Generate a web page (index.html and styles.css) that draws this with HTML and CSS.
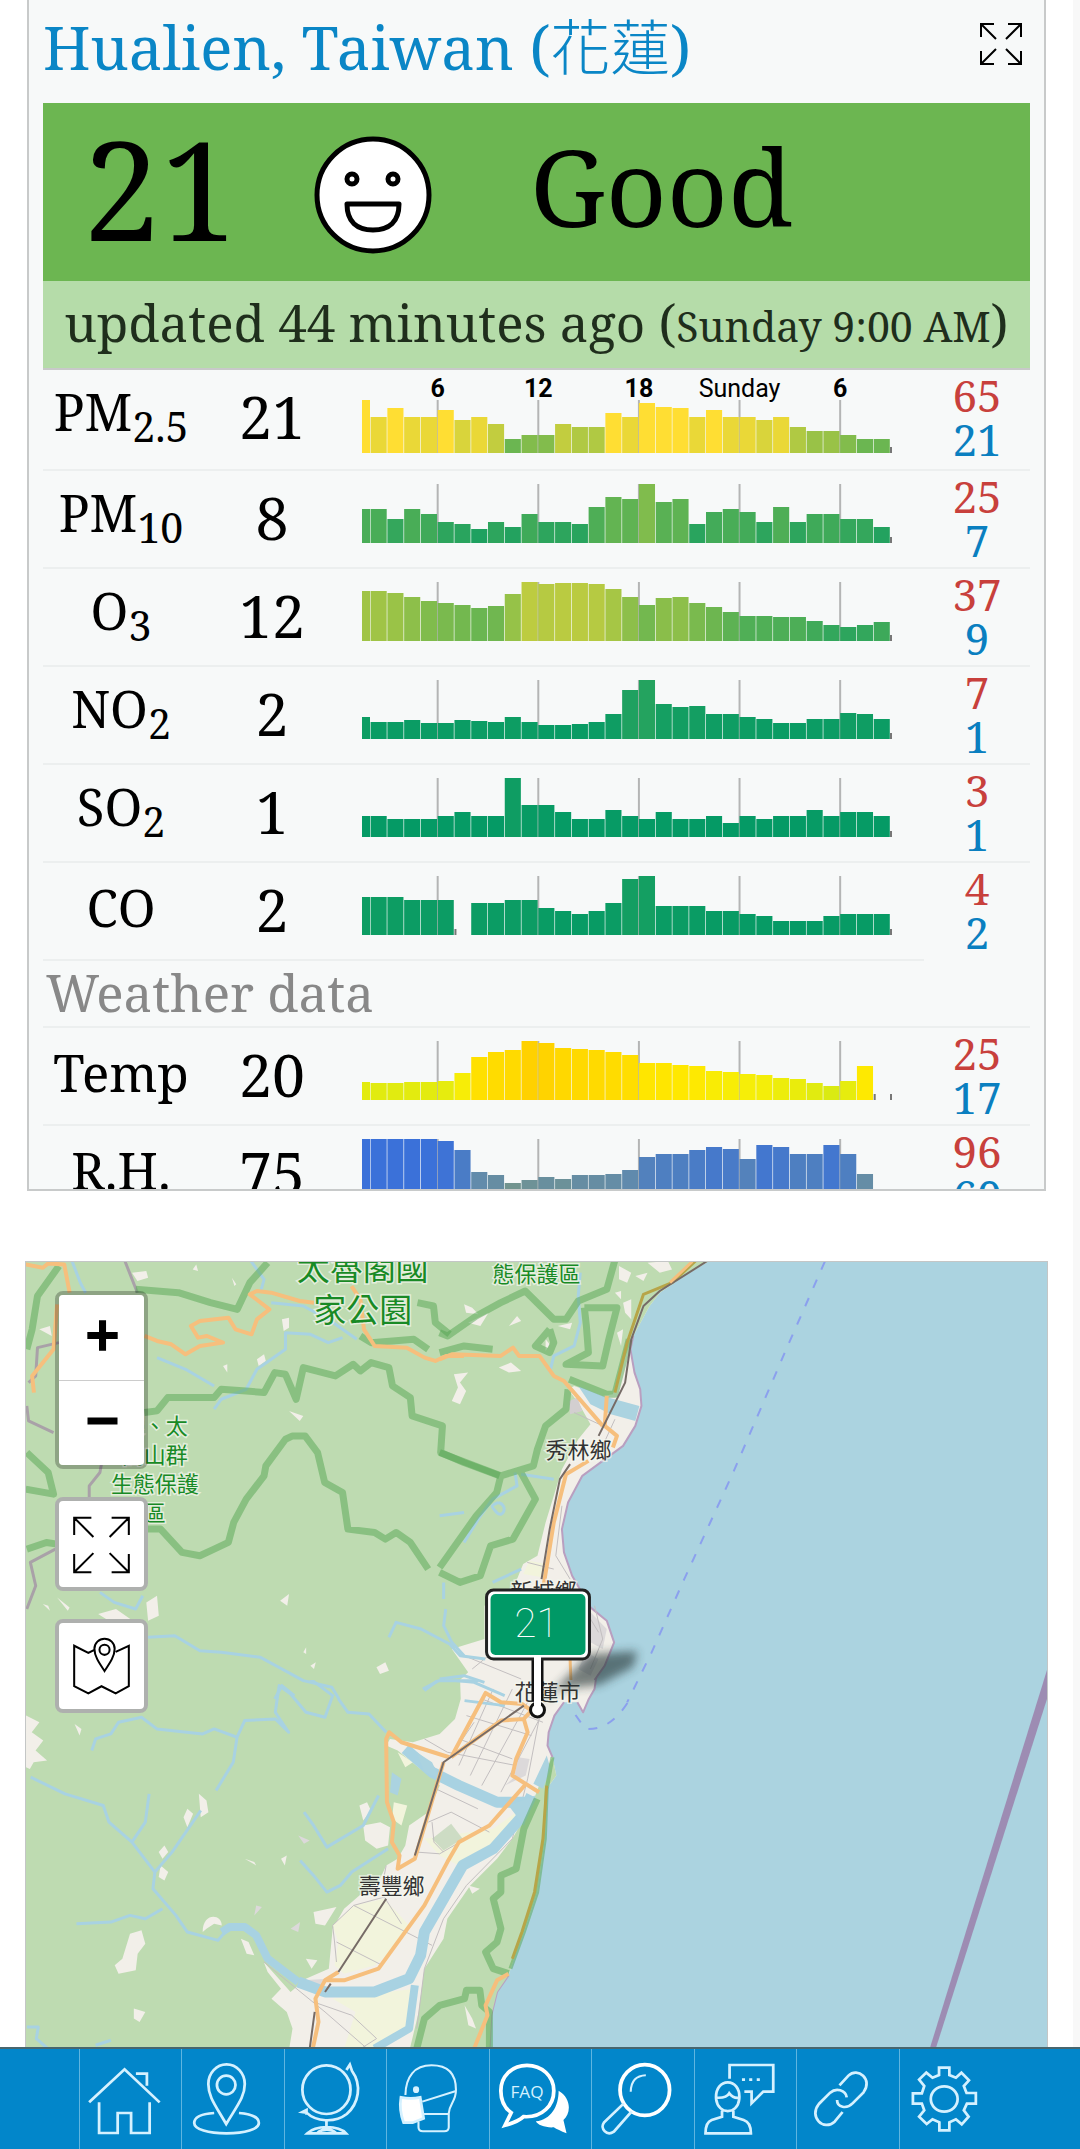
FILE: index.html
```html
<!DOCTYPE html>
<html lang="en">
<head>
<meta charset="utf-8">
<meta name="viewport" content="width=device-width, initial-scale=1">
<title>Hualien, Taiwan air quality</title>
<link rel="stylesheet" href="styles.css">
</head>
<body>
<div class="page">
<main class="content">
<section class="card">
  <header class="card-head">
    <h1 class="title"><a href="#hualien">Hualien, Taiwan (<span lang="zh-TW">花蓮</span>)</a></h1>
    <button class="expand" aria-label="Expand"><svg viewBox="0 0 42 42"><path d="M1 14V1h13M1 1l15 15M28 1h13v13M41 1L26 16M1 28v13h13M1 41l15-15M28 41h13V28M41 41L26 26"/></svg></button>
  </header>
  <div class="banner">
    <span class="aqi">21</span>
    <svg class="face" viewBox="0 0 118 118" aria-hidden="true"><circle cx="59" cy="59" r="56" fill="#fff" stroke-width="5"/><circle cx="38" cy="43" r="5" stroke-width="5"/><circle cx="79" cy="43" r="5" stroke-width="5"/><path d="M33 68h52c0 18-10 26-26 26S33 86 33 68z" stroke-width="5" stroke-linejoin="round"/></svg>
    <span class="level">Good</span>
  </div>
  <p class="updated">updated 44 minutes ago (<small>Sunday 9:00 AM</small>)</p>
  <table class="readings">
    <colgroup><col class="c-name"><col class="c-value"><col><col class="c-range"></colgroup>
    <tbody>
    <tr class="first"><th scope="row">PM<sub>2.5</sub></th><td class="value">21</td><td class="chart" data-series="pm25"></td><td class="range"><b>65</b><i>21</i></td></tr>
    <tr><th scope="row">PM<sub>10</sub></th><td class="value">8</td><td class="chart" data-series="pm10"></td><td class="range"><b>25</b><i>7</i></td></tr>
    <tr><th scope="row">O<sub>3</sub></th><td class="value">12</td><td class="chart" data-series="o3"></td><td class="range"><b>37</b><i>9</i></td></tr>
    <tr><th scope="row">NO<sub>2</sub></th><td class="value">2</td><td class="chart" data-series="no2"></td><td class="range"><b>7</b><i>1</i></td></tr>
    <tr><th scope="row">SO<sub>2</sub></th><td class="value">1</td><td class="chart" data-series="so2"></td><td class="range"><b>3</b><i>1</i></td></tr>
    <tr><th scope="row" class="plain">CO</th><td class="value">2</td><td class="chart" data-series="co"></td><td class="range"><b>4</b><i>2</i></td></tr>
    <tr class="group"><th scope="rowgroup" colspan="3">Weather data</th></tr>
    <tr><th scope="row" class="plain">Temp</th><td class="value">20</td><td class="chart" data-series="temp"></td><td class="range"><b>25</b><i>17</i></td></tr>
    <tr><th scope="row" class="plain">R.H.</th><td class="value">75</td><td class="chart" data-series="rh"></td><td class="range"><b>96</b><i>60</i></td></tr>
    </tbody>
  </table>
</section>

<section class="map" aria-label="Map">
<svg class="tiles" viewBox="26 1262 1022 787" preserveAspectRatio="xMidYMid slice">
  <defs><filter id="soft" x="-50%" y="-50%" width="200%" height="200%"><feGaussianBlur stdDeviation="5"/></filter></defs>
  <rect x="0" y="1200" width="1400" height="1000" fill="#abd3e0"/>
  <!-- south: plain, river valley and coastal range -->
  <g transform="translate(0 1680) scale(.3827 .3333)">
    <path fill="#f2efe9" d="M0-10H1560L1555 30 1540 60 1525 100 1510 70H1475L1450 110 1435 160 1432 200 1445 235 1455 290 1430 330 1425 480 1405 640 1370 760 1350 820 1330 890 1300 940 1285 1010 1280 1120H0z"/>
    <path class="coast" d="M1560-10L1555 30 1540 60 1525 100 1510 70M1475 70L1450 110 1435 160 1432 200 1445 235M1330 890L1300 940 1285 1010 1280 1120"/>
    <path fill="#bedbb1" d="M60-10H1203L1205 60 1190 120 1150 165 1080 190 1020 180 1010 200 1040 215 1100 270 1140 300 1150 320 1120 400 1070 440 1060 500 1040 540 1010 560 990 610 940 650 900 690 870 750 860 870 800 900 760 940 690 850 700 880 735 930 710 960 750 1000 765 1050 755 1120H60z"/>
    <path fill="#bedbb1" d="M1445 235L1455 290 1430 330 1425 480 1405 640 1370 760 1350 820 1330 890 1300 940 1285 1010 1280 1120H1070L1095 1000 1110 870 1160 780 1170 720 1230 620 1300 540 1340 480 1380 400 1400 350 1420 290z"/>
    <path fill="#f2f4dc" d="M925 680L1005 660 1070 740 1030 810 980 860 900 885 875 860 885 790 870 740zM870 960L1085 930 1075 1050 985 1110H900L930 1000zM1110 480L1290 450 1350 400 1330 470 1200 560 1150 530zM1030 370L1065 380 1050 440 1025 420zM1040 220L1080 250 1060 265z"/>
    <path fill="#f2efe9" d="M68 110l35 20-20 30 30 25-20 30 30 30-35 5-10 20-10-5zM195 135l18 15-5 20zM520 345l20 20 5 35-20 15zM490 390l15 15-15 40-10-30zM430 500l10 20-15 20-10-20zM420 560l20 20-10 25-15-10zM530 760c0-60 50-55 50-20l-20-5-20 15zM340 765l30-10 10 40-20 30-5 50-45 10-10-25 20-20zM630 780l20 10 15 40-20-5zM350 990l30 10-15 30-15-10zM950 440l45-10 25 15-5 55-30 10-30-25zM640 540l25 10 5 10zM735 540l15-10-5 30zM820 700l60-15-30 55-25-5zM800 840l30 5-15 25zM940 380l20-10 10 25-20 30zM1140 700l20 30-20 60-25 20zM1225 620l30 10-20 15zM1215 980l20 40 10 30-20-10z"/>
    <path fill="#dcd9da" d="M1320 320l55-30 10-50-30-5-10 60zM790 905l70-5-40 40zM780 470l30 15-15 10zM760 750l25-20-5 30zM670 680l15 5-20 25z"/>
    <path fill="#cddcc4" d="M1130 480l50-45 30 45-50 35z"/>
    <g class="grid"><path d="M1240 130L1180 230M1290 30L1200 260M1340 30L1230 290M1380 70L1260 320M1420 100L1310 340M1260 60L1420 130M1220 110L1390 170M1110 180L1170 220 1350 260M1200 180L1340 240M1140 330L1250 390M1120 430L1180 400 1280 460M1130 430L1135 490 1160 520M1090 520L1150 525 1210 485M690 850L850 1000 960 1110M820 970L920 1010 985 1080 930 1120M925 680L1130 800M875 790L870 740 925 680 1005 655 1050 735M880 790L1000 860M875 790L880 850M1010 560L1000 620M1415 90L1380 300 1340 480 1220 620 1160 720 1110 870 1090 1050"/></g>
    <g class="water"><path d="M240 215L250 180 290 165 310 130 370 115 410 150 530 165 560 150 620 175 640 125 720 120 755 160 720 100 730 20 760 45 800 100 850 115 870 50 800-10M620 175L610 250 565 335M80 295L170 345 270 380 285 430 345 490 405 580 400 630 460 710 490 760 570 785 600 745M345 490L380 430 390 345M525 395L450 520 405 580M200 735L290 730 340 710 380 720 425 690M795 400L820 440 855 505 950 440 990 350M785 545L820 590 855 640 890 620 920 580 1015 510M885 60L910 100 965 105 1010 160M70 1045H100L95 1080 130 1115M250 1100L290 1085M1110 35L1150 0 1240 10 1320 50M1215 65L1320 80"/></g>
    <g class="water w2"><path d="M580 760L600 745 640 745 670 770 700 840 780 910"/></g>
    <g class="water w3"><path d="M780 910L850 940 980 940 1070 900 1100 830 1110 760 1150 680 1210 560 1290 510 1360 420 1390 350M1060 210L1130 280 1200 320 1300 370 1380 370"/></g>
    <g class="water w2"><path d="M1085 920L1070 1050 980 1110"/></g>
    <path fill="#abd3e0" d="M1090 220l40 30 20 50-40-20zM1025 280l25 20-10 50-20-10zM1330 380l70-30-30 90zM1430 230l10 40-20 60-25-15z"/>
    <path class="reserve" d="M1405 360L1370 450 1350 570 1310 590 1310 640 1290 660 1310 750 1300 790 1270 820 1290 870 1330 885M1090 1110L1110 1020 1150 980 1215 960 1220 935 1255 935 1260 980 1280 1000V1110"/>
    <path class="reserve thin" d="M1445 235L1430 330 1425 480 1405 640 1370 760 1335 870"/>
    <path class="gold" d="M1430 320L1420 480 1398 640 1365 760 1340 840"/>
    <path class="road" d="M1180 235L1270 42 1310 70 1365 75 1390 95 1370 120 1310 125 1180 235M1160 250L1085 540 1040 570 1045 530 1025 490 1030 430 1012 370 1010 180 1018 160 1050 190 1175 235M1370 120L1380 160 1350 240 1340 290 1410 340M1372 320L1280 440 1200 490 1170 550 1110 680 990 870 900 905 850 905 825 960 833 1030 818 1110M850 905L885 880M1330 885L1300 905 1270 980 1275 1010 1240 1110"/>
    <path class="rail" d="M1370 80L1160 250 1085 530M1010 660L885 880M865 915L850 940M823 1000L810 1110"/>
  </g>
  <!-- north-west: national park -->
  <g transform="translate(440 1240) scale(.40816 .33333)">
    <path fill="#f2efe9" d="M-1100 0H690L665 62 600 110 540 160 515 200 475 290 468 330 478 400 492 450 495 500 480 560 450 620 400 665 350 710 315 790 300 870 305 940 325 1010 370 1105 410 1145 428 1210 405 1280 380 1323H-1100z"/>
    <path class="coast" d="M475 290L468 330 478 400 492 450 495 500 480 560 450 620 400 665 350 710 315 790 300 870 305 940 325 1010 370 1105 410 1145 428 1210 405 1280 380 1323"/>
    <path fill="#bedbb1" d="M-1100 0H690L665 62 600 110 540 160 515 200 475 290 440 400 425 465 400 470 330 440 315 450 340 490 370 555 340 600 300 690 290 730 260 850 240 950 205 975 180 1050 110 1100V1200L30 1230 70 1300 50 1323H-1100z"/>
    <path fill="#f2efe9" d="M440 80l30 20-10 30-20-10zM480 110l30-10-10 25zM510 70l50-5 10 25-30 10zM430 160l15-5v25zM450 190l20-10v60l-15-20zM435 280l15-10-5 50zM60 195l20 10 15 20-30-5zM70 250l50-30-20 40zM170 260l20-30 10 15zM290 260l35-10-5 20zM145 385l30-15 25 25-30 5zM35 405l35-5-20 30 15 25-15 40-20-10 15-40zM260 300l10 15-10 20z"/>
    <path fill="#f2f4dc" d="M220 965l-15 40 50 10 5-40z"/>
    <path fill="#abd3e0" d="M340 440l60 30 90 30-10 45-60-20-50-30z"/>
    <path fill="#d3cfd0" d="M318 485l20-10 12 40-30 10z"/>
    <path fill="#dcd9da" d="M370 1120l40 50-10 60-30-20zM360 1240l30 20-20 50-30-20z"/>
    <g class="grid"><path d="M60 1250L200 1320M80 1290L120 1250M215 970L280 990M380 1100L400 1200 370 1290M330 520L400 560M430 540L400 620M300 800L285 950 320 1020M390 1180L370 1140"/></g>
    <g class="water"><path d="M345 100L340 170 345 250 330 320 280 350 270 400M185 700L190 740 130 780 100 830 60 910M145 790c25 10 10 50-5 30s-15-20 5-30M0 830L60 820M200 705L280 720M130 1030L200 990M10 1030V1080M15 1110L10 1160 30 1210 60 1250M0 1320L60 1310 110 1330"/></g>
    <path class="reserve" d="M430 62L410 150 340 185 310 240 280 240 210 155 150 190 90 230 20 290 0 280M355 205H435L415 300 400 380 310 375 365 340 360 260 355 205M270 270L235 320 270 340 280 310 270 270M0 340L60 320 130 330M315 450L310 510 260 560 240 630 230 680 150 710 0 640M150 710L140 760 90 830 0 985M195 690L235 780 180 900 125 920 100 1010 50 1030 0 1000"/>
    <path class="reserve" d="M318 420L410 465 430 465 465 300"/>
    <path class="road" d="M0 360L30 345 150 350 180 325 195 350 245 350 280 410 305 425 400 560M410 470L405 560 435 590 425 625M365 665L310 705 280 850 255 1040"/>
    <path class="gold" d="M630 62L570 130 500 165 460 310 430 460"/>
    <path class="rail" d="M660 62L540 155 500 200 470 300 455 430 390 590M320 675L295 720 270 870 250 1020"/>
    <path class="road thin" d="M320 1260L322 1323M620 66L565 130"/>
    <path fill="none" stroke="#8ba0ee" stroke-width="2" stroke-dasharray="9 11" vector-effect="non-scaling-stroke" d="M945 66L850 330 720 700 600 1020 520 1240 460 1390"/>
  </g>
  <g transform="translate(0 1240) scale(.35714 .33333)">
    <path fill="#f2efe9" d="M370 100l40-5 5 20-30 10zM650 115l12 20-5 5zM110 270l30-10 5 30zM790 240l20-5v30l-15 10zM720 360l20-15 5 20-20 15zM625 380l12-5v25zM540 90l10-15 5 20zM810 515l40 15-10 15zM785 1085l25-20-5 35zM1055 1285l25-15 10 25-25 10zM275 1125l50-15 40 30-60 5zM410 1090l30-20 5 60-30 15zM160 1075l35 30-5 10zM120 1095l15 5 5 15zM850 1240l8-15v20zM870 1280l15-10-5 20z"/>
    <g class="water"><path d="M700 60L740 120 730 160M200 60L225 130 240 160M440 355L520 390 600 440M600 510L620 480 690 450 720 390 800 330 800 280 870 285 920 310 960 295M760 190L850 200 920 240 1000 300M280 1060L320 1090 380 1110 400 1070M415 1195L490 1190 560 1235 620 1240 730 1255 790 1290 850 1325 930 1345 950 1380M1090 1195L1110 1150 1180 1170 1260 1215 1290 1250 1360 1260M770 1380L790 1340 825 1370M1185 1350L1230 1325 1340 1325"/></g>
    <path class="border" d="M350 65L385 160M165 310L105 325 100 410 80 430M150 580L80 545 75 500M285 670L280 700 250 740V775M155 930L85 970 100 1040 75 1110"/>
    <path class="reserve" d="M165 80L105 170 90 270 75 330M380 150L500 160 590 190 665 210 700 130 750 70M75 640L135 700 150 765 72 750M75 930L130 910 160 915M405 520L440 515 470 475 600 475 620 450 690 455 740 460 770 400 800 405 830 480 850 385 940 410 990 375 1010 395 1040 370 1090 385 1100 440 1150 475 1155 530 1240 560 1235 640 1300 670 1400 710M380 870L450 870 510 940 560 950 600 930 640 910 655 850 690 780 740 710 745 680 800 600 820 590H855L890 640 910 730 960 760 975 870 1050 880 1080 900 1110 880 1150 910 1200 990M1170 190L1215 200 1220 250 1260 285M1010 290L1040 310 1160 300 1200 330"/>
    <path class="road" d="M72 75L120 85 135 72 180 75 195 160M160 195L150 330 90 410 95 460M405 290L440 305 480 315 520 345 560 320 625 310 580 290 555 295 535 260 560 245 640 235 660 270 705 285 720 240 755 210 700 165 720 155 760 160 840 185 880 190M985 140L1010 180 1020 270 1050 320 1140 325 1190 355 1220 365 1250 350 1300 350"/>
  </g>
  <path d="M1048 1671L1048 1700 936 2052 930 2052z" fill="#9a7aa8" opacity=".8"/>
  <path fill="none" stroke="#8ba0ee" stroke-width="2" stroke-dasharray="9 11" d="M628 1704q-18 28-42 26l-10-14"/>
  <g class="park" text-anchor="middle">
    <text x="363" y="1281" font-size="33">太魯閣國</text><text x="363" y="1323" font-size="33">家公園</text>
    <text x="537" y="1283" font-size="22">態保護區</text>
    <text x="155" y="1435" font-size="22">萊、太</text><text x="155" y="1464" font-size="22">閣山群</text><text x="155" y="1493" font-size="22">生態保護</text><text x="155" y="1522" font-size="22">區</text>
  </g>
  <g class="town" text-anchor="middle" font-size="22">
    <text x="579" y="1459">秀林鄉</text><text x="544" y="1600">新城鄉</text><text x="548" y="1701">花蓮市</text><text x="392" y="1895">壽豐鄉</text>
  </g>
  <g class="marker">
    <path d="M540 1706L590 1655 638 1652 634 1668 600 1686 560 1690z" fill="#233" opacity=".6" filter="url(#soft)"/>
    <path d="M538 1656V1702" stroke="#111" stroke-width="12"/>
    <rect x="487" y="1591" width="103" height="69" rx="7" fill="#fff" stroke="#222" stroke-width="3"/>
    <circle cx="538" cy="1711" r="7" fill="#fff" stroke="#111" stroke-width="3"/>
    <path d="M538 1655V1707" stroke="#fff" stroke-width="7"/>
    <rect x="491" y="1595" width="95" height="61" rx="5" fill="#096"/>
    <text x="537" y="1638" text-anchor="middle">21</text>
  </g>
</svg>
<div class="controls">
  <div class="zoom"><button aria-label="Zoom in"><svg viewBox="0 0 84 84"><path d="M28 40h30M43 25v30" stroke-width="7"/></svg></button><button aria-label="Zoom out"><svg viewBox="0 0 84 84"><path d="M28 40h30" stroke-width="7"/></svg></button></div>
  <button class="tool" aria-label="Full screen"><svg viewBox="0 0 84 84"><path d="M15 33V16h17M15 16l19 19M52 16h17v17M69 16L50 35M15 52v18h17M15 70l19-19M52 70h17V52M69 70L50 51"/></svg></button>
  <button class="tool" aria-label="Choose map"><svg viewBox="0 0 84 84"><path d="M35 26l-6 3-14-7v40l14 7 13-7 14 7 13-7V22l-13 6M45 47c-6-9-10-15-10-22a10 10 0 0 1 20 0c0 7-4 13-10 22z"/><circle cx="45" cy="26" r="5"/></svg></button>
</div>
</section>
</main>
</div>

<nav class="tabs" aria-label="Main">
  <a href="#home" aria-label="Home"><svg viewBox="245 60 221 228" preserveAspectRatio="none"><path d="M257 187L360 88 462 187M393 101H425V137M286 187V279H340V219H379V279H433V187"/></svg></a>
  <a href="#here" aria-label="Nearest station"><svg viewBox="543 60 221 228" preserveAspectRatio="none"><path d="M657 252C625 195 605 170 605 132A52 58 0 0 1 711 132C711 170 690 195 657 252zM622 219C580 222 564 235 564 249 564 268 605 280 658 280S752 268 752 249C752 235 735 222 694 219"/><ellipse cx="657" cy="135" rx="27" ry="28"/></svg></a>
  <a href="#world" aria-label="World map"><svg viewBox="840 60 221 228" preserveAspectRatio="none"><ellipse cx="946" cy="149" rx="70" ry="73"/><path d="M1004 90L1014 74 1020 92C1050 135 1040 190 1005 222 970 250 915 245 888 218L876 216 888 210 888 224M946 242V258M890 280C915 255 980 255 1003 280zM920 278C935 266 960 266 973 278"/></svg></a>
  <a href="#mask" aria-label="Masks"><svg viewBox="1140 60 221 228" preserveAspectRatio="none"><path d="M1179 165C1180 110 1205 76 1255 76 1305 76 1326 105 1326 150 1326 185 1307 190 1305 220V262Q1305 274 1292 274H1230Q1217 274 1217 262V245M1228 185L1326 153M1230 222H1305" stroke-width="6"/><path d="M1166 172Q1195 178 1222 172L1232 235 1200 248H1174Q1160 210 1166 172z" fill="#fff"/><ellipse cx="1210" cy="149" rx="5" ry="6" fill="#fff"/></svg></a>
  <a href="#faq" aria-label="FAQ"><svg viewBox="1437 60 221 228" preserveAspectRatio="none"><path class="bold" d="M1484 218L1466 256Q1505 245 1520 230C1575 234 1608 195 1608 152 1608 108 1573 76 1530 76 1485 76 1454 110 1454 152 1454 182 1465 204 1484 218z"/><path d="M1622 152C1660 175 1658 220 1636 240L1645 280Q1620 270 1608 262C1585 264 1560 255 1556 244 1600 238 1622 200 1622 152z" fill="#fff" stroke="none"/><text x="1530" y="174" text-anchor="middle">FAQ</text></svg></a>
  <a href="#search" aria-label="Search"><svg viewBox="167 60 221 228" preserveAspectRatio="none"><ellipse class="bold" cx="306" cy="150" rx="72" ry="76"/><path d="M265 155C266 125 280 107 309 106" stroke-width="6"/><path d="M245 190L187 248C175 265 195 290 216 275L268 214"/></svg></a>
  <a href="#contact" aria-label="Contact"><svg viewBox="463 60 221 228" preserveAspectRatio="none"><path d="M549 116V75H676V155H647L613 190V155H592M510 178C504 110 584 110 577 178 572 225 516 225 510 178zM511 173Q540 175 548 160 560 176 577 173M527 212V230L497 240Q479 247 479 280H611Q611 247 590 240L560 230V212M585 119h9M606 119h9M628 119h9"/></svg></a>
  <a href="#links" aria-label="Links"><svg viewBox="763 60 221 228" preserveAspectRatio="none"><path d="M872 136L898 107C925 80 970 118 942 157L910 190C893 208 865 203 865 180M893 172C890 150 862 142 845 158L812 192C782 230 825 275 858 245L881 216"/></svg></a>
  <a href="#settings" aria-label="Settings"><svg viewBox="1060 60 221 228" preserveAspectRatio="none"><path d="M1159 105V83H1189V105L1208 113 1224 98 1246 121 1231 138 1239 159H1266V191H1240L1231 211 1245 230 1225 253 1208 238 1189 247V271H1160V247L1140 238 1123 252 1101 230 1116 211 1109 191H1083V160H1109L1116 138 1101 119 1122 98 1140 113z"/><ellipse cx="1174" cy="177" rx="39" ry="38"/></svg></a>
</nav>
<script src="charts.js"></script>
</body>
</html>
```
FILE: styles.css
```css
* { box-sizing: border-box; }
html { background: #f8f8f8; }
body {
  margin: 0;
  min-height: 100vh;
  display: flex;
  flex-direction: column;
  font-family: "Noto Serif", "DejaVu Serif Condensed", "Noto Sans CJK TC", serif;
  color: #000;
}
.page { flex: 1; display: flex; padding-right: 7px; }
.content { flex: 1; display: flex; flex-direction: column; background: #fff; gap: 70px; }
button { padding: 0; border: 0; background: #fff; }
svg { display: block; }

.card {
  height: 1191px;
  margin: 0 27px;
  padding: 0 14px;
  overflow: hidden;
  background: #f7f9f9;
  border: 2px solid #c8caca;
  border-top: 0;
}
.card-head { height: 103px; display: flex; justify-content: space-between; align-items: flex-start; }
.title { margin: 0; font-size: 60px; line-height: 94px; font-weight: 400; white-space: nowrap; }
.title a { color: #0a86c6; text-decoration: none; }
.title span { font-weight: 300; }
.expand { width: 42px; height: 42px; margin: 23px 8px 0 0; background: none; }
.expand svg { fill: none; stroke: #000; stroke-width: 2; }
.banner {
  height: 178px;
  padding: 0 40px;
  display: flex;
  align-items: center;
  background: #6cb651;
}
.aqi { width: 231px; margin-bottom: 10px; font-size: 138px; line-height: 168px; }
.face { width: 118px; margin-top: 6px; fill: none; stroke: #000; }
.level { margin: 0 0 12px 98px; font-size: 106px; line-height: 160px; }
.updated {
  margin: 0;
  height: 89px;
  line-height: 82px;
  font-size: 51px;
  text-align: center;
  white-space: nowrap;
  color: #1f2e1c;
  background: #b5dca9;
  border-bottom: 2px solid #c8c9c9;
}
.updated small { font-size: 41px; }

.readings { width: 100%; table-layout: fixed; border-collapse: collapse; }
.c-name { width: 156px; }
.c-value { width: 146px; }
.c-range { width: 106px; }
.readings tr { height: 98px; }
.readings tr.first { height: 100px; }
.readings tr + tr > * { border-top: 2px solid #ecefef; }
.readings th, .readings td { padding: 0; text-align: center; vertical-align: top; }
.readings th { font-size: 51px; line-height: 82px; font-weight: 400; white-space: nowrap; }
.readings .plain { line-height: 88px; }
.readings sub { font-size: 41px; line-height: 0; vertical-align: -11px; }
.readings .value { font-size: 59px; line-height: 92px; }
.readings .chart { padding: 0 32px 0 17px; }
.readings .range { padding-top: 3px; font-size: 44px; line-height: 44px; }
.range b, .range i { display: block; font-weight: 400; font-style: normal; }
.range b { color: #c8403c; }
.range i { color: #0a7fc0; }
.readings .group { height: 67px; }
.readings .group th { padding-left: 3px; text-align: left; line-height: 62px; color: #888; }
.chart svg { width: 100%; }
.chart line { stroke: #b4b5b5; stroke-width: 2; }
.chart .gap { stroke: #777; }
.chart text { font: 400 25px Roboto, sans-serif; text-anchor: middle; }
.chart .hour { font-weight: 700; }

.map {
  position: relative;
  flex: 1;
  min-height: 700px;
  margin: 0 25px;
  border: 1px solid #c4c6c6;
  border-bottom: 0;
  overflow: hidden;
}
.tiles { position: absolute; inset: 0; width: 100%; height: 100%; }
.tiles path { vector-effect: non-scaling-stroke; stroke-linejoin: round; }
.coast { fill: none; stroke: #b99fc0; stroke-width: 2; }
.grid path { fill: none; stroke: #c3bfc0; stroke-width: 1; }
.water path { fill: none; stroke: #a8d2e2; stroke-width: 3; }
.w2 path { stroke-width: 8; }
.w3 path { stroke-width: 11; }
.reserve { fill: none; stroke: #55a653; stroke-width: 7; opacity: .5; }
.reserve.thin { stroke-width: 4; }
.border { fill: none; stroke: #a493a6; stroke-width: 3; opacity: .8; }
.road { fill: none; stroke: #f6bf7d; stroke-width: 4; }
.road.thin { stroke-width: 3; }
.gold { fill: none; stroke: #b7a548; stroke-width: 3; }
.rail { fill: none; stroke: #766b66; stroke-width: 2; }
.park, .town {
  font-family: "Noto Sans CJK TC", sans-serif;
  paint-order: stroke;
  stroke: #f5f8f0;
  stroke-width: 3px;
  stroke-opacity: .7;
}
.park { fill: #188a25; }
.town { fill: #333; }
.marker text { font: 100 40px Roboto, sans-serif; fill: #fff; }

.controls {
  position: absolute;
  top: 29px;
  left: 29px;
  width: 93px;
  display: flex;
  flex-direction: column;
  gap: 28px;
}
.zoom { border: 4px solid rgba(0, 0, 0, .25); border-radius: 8px; background-clip: padding-box; overflow: hidden; }
.zoom button { display: block; width: 100%; height: 85px; }
.zoom button + button { border-top: 1px solid #ccc; }
.controls svg { width: 100%; height: 100%; fill: none; stroke: #000; stroke-width: 2; }
.tool { height: 94px; border: 4px solid #aeb0ae; border-radius: 8px; }

.tabs {
  position: sticky;
  bottom: 0;
  height: 102px;
  padding: 0 79px;
  display: grid;
  grid-template-columns: repeat(9, 1fr);
  background: #0286ca;
  border-top: 2px solid #47666f;
}
.tabs a { padding: 11px 0 0 5px; border-left: 1px solid #5fb5e0; }
.tabs svg { width: 76px; height: 76px; fill: none; stroke: #d5f1ff; stroke-width: 8; }
.tabs .bold { stroke: #fff; stroke-width: 11; }
.tabs text { font: 400 50px "Open Sans", sans-serif; fill: #d5f1ff; stroke: none; }
```
FILE: charts.js
```js
const AQI = [[0, 0, 153, 102], [50, 255, 222, 51], [100, 255, 222, 51]];
const TEMP = [[14, 218, 234, 18], [26, 246, 238, 8], [35, 255, 232, 0], [59, 255, 209, 0]];
const HUMID = [[15, 114, 148, 143], [26, 98, 139, 171], [48, 74, 124, 198], [59, 59, 113, 217]];

// bars: bar heights in chart units; value: reading for a bar height
const SERIES = {
  pm25: { scale: AQI, value: h => 21 + (h - 14) * 1.13, labels: true, bars: [53,36,45,36,36,43,33,36,29,14,18,18,29,26,26,40,36,50,46,45,36,43,36,36,33,36,26,22,22,18,14,14] },
  pm10: { scale: AQI, value: h => h * 25 / 59, bars: [34,34,24,34,29,21,19,14,21,16,29,21,21,19,36,46,44,59,41,44,19,31,34,31,21,36,21,29,29,24,24,16] },
  o3: { scale: AQI, value: h => h * 37 / 59, bars: [50,50,48,44,40,38,36,33,35,47,59,57,58,58,57,52,44,36,43,44,38,34,29,25,25,24,24,20,16,14,16,19] },
  no2: { scale: AQI, value: h => h * 7 / 59, bars: [22,17,17,19,16,16,19,18,17,22,17,14,14,15,17,25,49,59,35,32,33,25,25,22,20,16,16,20,20,26,25,20] },
  so2: { scale: AQI, value: h => h * 3 / 59, bars: [21,21,18,18,18,21,25,21,21,59,32,32,25,18,18,27,21,18,25,18,18,21,14,21,18,21,21,27,21,25,25,21] },
  co: { scale: AQI, value: h => h * 4 / 59, bars: [38,38,38,35,35,35,0,32,32,35,35,27,24,21,24,32,56,59,29,29,29,24,24,21,19,14,14,14,19,21,21,21] },
  temp: { scale: TEMP, value: h => h, bars: [18,17,17,18,18,19,27,43,48,50,59,57,52,51,50,48,45,37,37,35,34,29,28,26,25,22,21,17,14,19,34,0] },
  rh: { scale: HUMID, value: h => h, bars: [59,59,59,59,59,57,48,26,23,15,18,21,19,23,23,24,28,41,44,44,48,51,49,39,53,51,44,44,53,44,24,0] }
};

function colour(scale, v) {
  let i = 1;
  while (i < scale.length - 1 && v > scale[i][0]) i++;
  const a = scale[i - 1], b = scale[i];
  const t = Math.max(0, Math.min(1, (v - a[0]) / (b[0] - a[0])));
  return `rgb(${[1, 2, 3].map(k => Math.round(a[k] + (b[k] - a[k]) * t)).join(",")})`;
}

const STEP = 16.77;
const left = i => i === 0 ? 0 : 8.6 + STEP * (i - 1);

document.querySelectorAll("[data-series]").forEach(cell => {
  const s = SERIES[cell.dataset.series];
  const base = s.labels ? 83 : 72;
  const top = base - (s.labels ? 53 : 59);
  let out = "";
  [5, 11, 17, 23, 29].forEach((i, n) => {
    const x = left(i);
    out += `<line x1="${x}" x2="${x}" y1="${top}" y2="${base}"/>`;
    if (s.labels) {
      const text = ["6", "12", "18", "Sunday", "6"][n];
      out += `<text x="${x}" y="27" class="${text === "Sunday" ? "day" : "hour"}">${text}</text>`;
    }
  });
  s.bars.forEach((h, i) => {
    if (h) out += `<rect x="${left(i)}" y="${base - h}" width="${i ? 16.1 : 8}" height="${h}" fill="${colour(s.scale, s.value(h))}"/>`;
    else out += `<line class="gap" x1="${left(i) + 1}" x2="${left(i) + 1}" y1="${base - 6}" y2="${base}"/>`;
  });
  out += `<line class="gap" x1="529" x2="529" y1="${base - 6}" y2="${base}"/>`;
  cell.innerHTML = `<svg viewBox="0 0 530 ${base}" aria-hidden="true">${out}</svg>`;
});
```
